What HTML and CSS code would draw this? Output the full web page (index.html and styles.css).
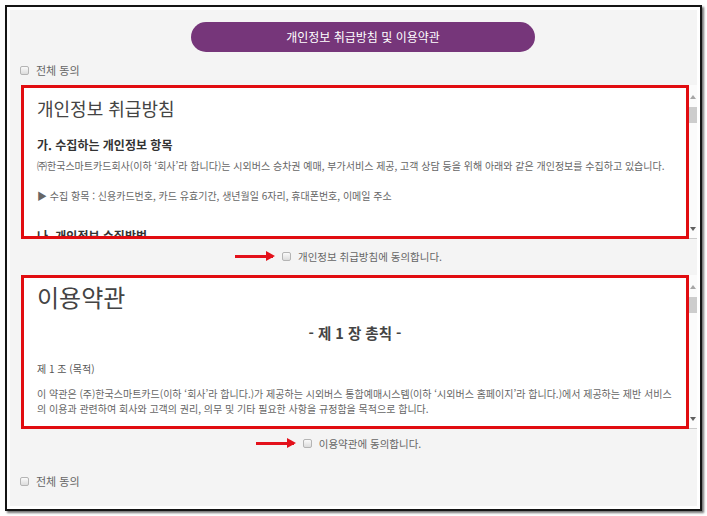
FILE: index.html
```html
<!DOCTYPE html>
<html lang="ko">
<head>
    <meta charset="UTF-8">
    <meta name="viewport" content="width=device-width, initial-scale=1.0">
    <title>개인정보 취급방침 및 이용약관</title>
    <link rel="stylesheet" href="styles.css">
</head>
<body>
    <div class="frame">
        <div class="panel">
            <div class="title-row">
                <div class="title-pill">개인정보 취급방침 및 이용약관</div>
            </div>
            <label class="check-all"><span class="box"></span>전체 동의</label>

            <div class="terms terms-privacy">
                <div class="terms-body">
                    <h2 class="terms-title">개인정보 취급방침</h2>
                    <h3 class="terms-sub">가. 수집하는 개인정보 항목</h3>
                    <p class="terms-text first">㈜한국스마트카드회사(이하 ‘회사’라 합니다)는 시외버스 승차권 예매, 부가서비스 제공, 고객 상담 등을 위해 아래와 같은 개인정보를 수집하고 있습니다.</p>
                    <p class="terms-text items">▶ 수집 항목 : 신용카드번호, 카드 유효기간, 생년월일 6자리, 휴대폰번호, 이메일 주소</p>
                    <h3 class="terms-sub next">나. 개인정보 수집방법</h3>
                </div>
                <div class="scrollbar">
                    <span class="arrow-up"></span>
                    <span class="thumb"></span>
                    <span class="track"></span>
                    <span class="arrow-down"></span>
                </div>
            </div>
            <div class="agree-row agree-privacy">
                <label class="agree"><span class="pointer"></span><span class="box"></span>개인정보 취급방침에 동의합니다.</label>
            </div>

            <div class="terms terms-use">
                <div class="terms-body">
                    <h2 class="terms-title big">이용약관</h2>
                    <h3 class="chapter">- 제 1 장 총칙 -</h3>
                    <p class="article">제 1 조 (목적)</p>
                    <p class="terms-text purpose">이 약관은 (주)한국스마트카드(이하 ‘회사’라 합니다.)가 제공하는 시외버스 통합예매시스템(이하 ‘시외버스 홈페이지’라 합니다.)에서 제공하는 제반 서비스 의 이용과 관련하여 회사와 고객의 권리, 의무 및 기타 필요한 사항을 규정함을 목적으로 합니다.</p>
                </div>
                <div class="scrollbar">
                    <span class="arrow-up"></span>
                    <span class="thumb"></span>
                    <span class="track"></span>
                    <span class="arrow-down"></span>
                </div>
            </div>
            <div class="agree-row agree-use">
                <label class="agree"><span class="pointer"></span><span class="box"></span>이용약관에 동의합니다.</label>
            </div>

            <label class="check-all bottom"><span class="box"></span>전체 동의</label>
        </div>
    </div>
</body>
</html>
```

FILE: styles.css
```css
body {
    margin: 0;
    background-color: #fff;
    font-family: "Noto Sans CJK KR", "Noto Sans", sans-serif;
    color: #666;
}

.frame {
    margin: 5px;
    width: 687px;
    padding: 3px;
    background-color: #fff;
    border: 2px solid #151515;
    box-shadow: 2px 2px 2px rgba(0, 0, 0, 0.55);
}

.panel {
    height: 496px;
    padding-top: 12px;
    box-sizing: border-box;
    background-color: #f4f4f4;
}

.title-row {
    display: flex;
    justify-content: center;
    padding-left: 19px;
}
.title-pill {
    width: 344px;
    height: 30px;
    line-height: 30px;
    border-radius: 15px;
    background-color: #76367a;
    color: #fff;
    font-size: 12px;
    text-align: center;
}

.box {
    display: inline-block;
    width: 7px;
    height: 7px;
    border: 1px solid #b4b4b4;
    border-radius: 2px;
    background: linear-gradient(#fafafa, #dcdcdc);
    margin-right: 7px;
    vertical-align: middle;
}

.check-all {
    display: flex;
    align-items: center;
    height: 16px;
    margin: 10px 0 0 10px;
    font-size: 11px;
    color: #666;
}
.check-all.bottom {
    margin-top: 16px;
}

/* 약관 스크롤 박스 */
.terms {
    display: flex;
    height: 154px;
    margin: 7px 0 0 11px;
    width: 676px;
    background-color: #fff;
}
.terms-use {
    margin-top: 2px;
}
.terms-body {
    flex: 1;
    border: 3px solid #e10c10;
    padding: 0 13px;
    overflow: hidden;
}

.scrollbar {
    width: 8px;
    display: flex;
    flex-direction: column;
    align-items: center;
    padding: 8px 0 5px;
    border-bottom: 1px solid #ccc;
    background-color: #fbfbfb;
}
.arrow-up,
.arrow-down {
    width: 0;
    height: 0;
    border-left: 3px solid transparent;
    border-right: 3px solid transparent;
    margin: 2px 0;
}
.arrow-up {
    border-bottom: 4px solid #a6a6a6;
}
.arrow-down {
    border-top: 4px solid #606060;
}
.thumb {
    width: 8px;
    height: 16px;
    margin-top: 6px;
    background-color: #cdcdcd;
}
.track {
    flex: 1;
}

.terms-title {
    margin: 8px 0 0;
    font-size: 18px;
    line-height: 24px;
    font-weight: normal;
    color: #444;
}
.terms-title.big {
    margin-top: 4px;
    font-size: 24px;
    line-height: 30px;
}
.terms-sub {
    margin: 16px 0 0;
    font-size: 12px;
    line-height: 18px;
    font-weight: bold;
    color: #333;
}
.terms-sub.next {
    margin-top: 23px;
}
.terms-text {
    margin: 0;
    font-size: 10px;
    line-height: 16px;
    color: #666;
}
.terms-text.first {
    margin-top: 4px;
}
.terms-text.items {
    margin-top: 14px;
}
.terms-text.purpose {
    margin-top: 9px;
    line-height: 15px;
}

.chapter {
    margin: 11px 0 0;
    text-align: center;
    font-size: 14.5px;
    line-height: 20px;
    color: #444;
}
.article {
    margin: 18px 0 0;
    font-size: 10px;
    line-height: 16px;
    color: #555;
}

/* 동의 체크 */
.agree-row {
    display: flex;
    justify-content: center;
    align-items: center;
    height: 34px;
    padding-left: 17px;
    font-size: 10.5px;
    color: #666;
}
.agree-use {
    height: 28px;
}
.agree {
    position: relative;
    display: flex;
    align-items: center;
}
.pointer {
    position: absolute;
    right: 100%;
    top: 50%;
    width: 38px;
    height: 3px;
    margin: -1px 9px 0 0;
    background-color: #e3111b;
}
.pointer::after {
    content: "";
    position: absolute;
    right: -2px;
    top: -4px;
    border-top: 5px solid transparent;
    border-bottom: 5px solid transparent;
    border-left: 9px solid #e3111b;
}
```
